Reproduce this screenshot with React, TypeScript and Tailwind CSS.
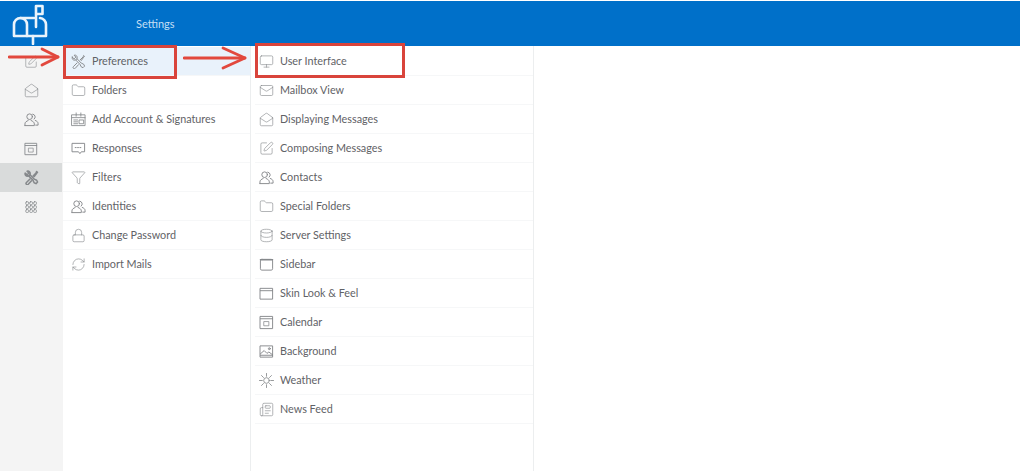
import React from "react";
import { Folder, Funnel, Lock, RefreshCw, Monitor, Mail, MailOpen, SquarePen, Database, Newspaper } from "lucide-react";

type IconProps = { size?: number; className?: string; strokeWidth?: number };

function Svg({ size = 16, strokeWidth = 1, className = "", children }: IconProps & { children: React.ReactNode }) {
  return (
    <svg width={size} height={size} viewBox="0 0 16 16" fill="none" stroke="currentColor" strokeWidth={strokeWidth} strokeLinecap="round" strokeLinejoin="round" className={className}>
      {children}
    </svg>
  );
}

function Tools(p: IconProps) {
  return (
    <Svg {...p}>
      <path d="M5 6.400 9.600 11l1.200 2.600 2 1 1.700-1.700-1-2-2.600-1.200L6.400 5" />
      <path d="M1.300 3.300 3.300 5.200 5.200 3.300 3.300 1.300C5.300.6 7 2.400 6.500 4.300L6.400 5 5 6.400 4.300 6.500C2.400 7 .6 5.300 1.300 3.300Z" />
      <path d="M9.700 6.300 13 3l.4-1.400 1 .9-.9 1L10.900 7M6.400 9.600 2.600 13.400a1.300 1.300 0 0 0 1.900 1.900L8 11.400" />
    </Svg>
  );
}

function Calendar(p: IconProps) {
  return (
    <Svg {...p}>
      <rect x="1.500" y="1.500" width="13" height="13" />
      <path d="M1.500 4h13" />
      <rect x="5.500" y="7" width="5" height="4.500" strokeWidth=".8" />
    </Svg>
  );
}

function AccountSig(p: IconProps) {
  return (
    <Svg {...p} strokeWidth={0.9}>
      <rect x="1" y="3" width="14" height="11.500" />
      <path d="M5.500 1v3.500M10.500 1v3.500M1 6h14M3 8.500h4M3 10.500h4M3 12.500h4M9 8.500h4.500v4H9z" />
    </Svg>
  );
}

function Sidebar(p: IconProps) {
  return (
    <Svg {...p}>
      <rect x="1.500" y="2.500" width="13" height="11.500" rx="1.500" />
      <path d="M1.500 3h13" strokeWidth="1.500" />
    </Svg>
  );
}

function Skin(p: IconProps) {
  return (
    <Svg {...p}>
      <rect x="1.500" y="2.500" width="13" height="11.500" />
      <path d="M1.500 5h13" />
    </Svg>
  );
}

function People(p: IconProps) {
  return (
    <Svg {...p}>
      <circle cx="6" cy="5" r="3" />
      <path d="M1 14.500v-1.800C1 10.800 2.500 10 4.500 9M7.500 9c2 1 3.500 1.800 3.500 3.700v1.800H1" />
      <path d="M9.300 2.300a3 3 0 0 1 1.500 5.300M12 9c1.800.7 3 1.600 3 3.400v1.600h-2.500" />
    </Svg>
  );
}

function Bubble(p: IconProps) {
  return (
    <Svg {...p}>
      <path d="M1.500 2.500h13v9H11l-1.500 2-1.500-2H1.500z" />
      <path d="M4.500 7h7" strokeDasharray="1 1.500" />
    </Svg>
  );
}

function Picture(p: IconProps) {
  return (
    <Svg {...p}>
      <rect x="1.500" y="2" width="13" height="12" />
      <path d="M1.500 10.500 5.500 7l3 3 2-1.500 4 3M1.500 12h13" />
      <circle cx="11" cy="5" r="1" />
    </Svg>
  );
}

function Sunny(p: IconProps) {
  return (
    <Svg {...p} strokeWidth={0.9}>
      <circle cx="8" cy="8" r="3" />
      <path d="M8 .5v3M8 12.500v3M.5 8h3M12.500 8h3M2.700 2.700l2.100 2.100M11.200 11.200l2.100 2.100M13.300 2.700l-2.100 2.100M4.800 11.200l-2.100 2.100" />
    </Svg>
  );
}

function Dots(p: IconProps) {
  return (
    <Svg {...p} strokeWidth={0.9}>
      {[2, 6.500, 11].flatMap((y) =>
        [2, 6.500, 11].map((x) => <rect key={`${x}-${y}`} x={x} y={y} width="3.200" height="3.200" rx="1" />)
      )}
    </Svg>
  );
}

function Mailbox({ className = "" }: { className?: string }) {
  return (
    <svg width="36" height="44" viewBox="0 0 36 44" fill="none" stroke="currentColor" strokeWidth="2.600" strokeLinejoin="round" strokeLinecap="round" className={className}>
      <path d="M2 35V23.500a6.500 6.500 0 0 1 13 0V35H2" />
      <path d="M8.500 17H22M28 17h0a6.500 6.500 0 0 1 6 6.500V35H15" />
      <path d="M24 26V5h6.500v8H24" />
      <path d="M21 35v8" />
    </svg>
  );
}

function Row({ icon, label, active, inset }: { icon: React.ReactNode; label: string; active?: boolean; inset?: boolean }) {
  return (
    <div className={`flex h-[29px] items-center border-b border-[#f6f7f8] ${inset ? "pl-[4px]" : "pl-[8px]"} ${active ? "bg-[#e9f2fb]" : ""}`}>
      <span className="flex w-[15px] justify-center text-[#85888b]">{icon}</span>
      <span className="ml-[6px] text-[10.800px] leading-none whitespace-nowrap text-[#5f6266]">{label}</span>
    </div>
  );
}

const leftRows: [React.ReactNode, string][] = [
  [<Tools size={15} />, "Preferences"],
  [<Folder size={15} strokeWidth={1} />, "Folders"],
  [<AccountSig size={15} />, "Add Account & Signatures"],
  [<Bubble size={15} />, "Responses"],
  [<Funnel size={15} strokeWidth={1} />, "Filters"],
  [<People size={15} />, "Identities"],
  [<Lock size={15} strokeWidth={1} />, "Change Password"],
  [<RefreshCw size={15} strokeWidth={1} />, "Import Mails"],
];

const rightRows: [React.ReactNode, string][] = [
  [<Monitor size={15} strokeWidth={1} />, "User Interface"],
  [<Mail size={15} strokeWidth={1} />, "Mailbox View"],
  [<MailOpen size={15} strokeWidth={1} />, "Displaying Messages"],
  [<SquarePen size={15} strokeWidth={1} />, "Composing Messages"],
  [<People size={15} />, "Contacts"],
  [<Folder size={15} strokeWidth={1} />, "Special Folders"],
  [<Database size={15} strokeWidth={1} />, "Server Settings"],
  [<Sidebar size={15} />, "Sidebar"],
  [<Skin size={15} />, "Skin Look & Feel"],
  [<Calendar size={15} />, "Calendar"],
  [<Picture size={15} />, "Background"],
  [<Sunny size={15} />, "Weather"],
  [<Newspaper size={15} strokeWidth={1} />, "News Feed"],
];

const railIcons: React.ReactNode[] = [
  <SquarePen size={14} strokeWidth={1} />,
  <MailOpen size={15} strokeWidth={1} />,
  <People size={15} />,
  <Calendar size={14} />,
  <Tools size={15} strokeWidth={1.600} />,
  <Dots size={14} />,
];

function Arrow({ className, width, head, half }: { className: string; width: number; head: number; half: number }) {
  return (
    <svg width={width} height={half * 2 + 4} viewBox={`0 0 ${width} ${half * 2 + 4}`} fill="none" stroke="#e2483d" strokeWidth="2.800" strokeLinecap="round" strokeLinejoin="round" className={`absolute ${className}`}>
      <path d={`M1 ${half + 2}H${width - 2}`} />
      <path d={`M${width - head - 2} 2 ${width - 2} ${half + 2} ${width - head - 2} ${half * 2 + 2}`} />
    </svg>
  );
}

export default function App() {
  return (
    <div className="relative h-[471px] w-[1024px] overflow-hidden bg-white pt-px font-['Lato',sans-serif]">
      <header className="relative flex h-[45px] w-[1020px] items-center bg-[#0070c9] text-white">
        <div className="flex h-[45px] w-[136px] items-start pl-[12px]">
          <Mailbox className="text-[#eaf4fb]" />
        </div>
        <span className="pt-px text-[11px] text-[#c4dff4]">Settings</span>
      </header>
      <div className="flex h-[425px]">
        <nav className="flex w-[63px] flex-col bg-[#f4f4f4] pt-px">
          {railIcons.map((icon, i) => (
            <div key={i} className={`flex h-[29px] w-[62px] items-center justify-center text-[#85888b] ${i === 4 ? "bg-[#d9dbdb] text-[#666a6d]" : ""}`}>
              {icon}
            </div>
          ))}
        </nav>
        <section className="w-[188px] border-r border-[#eceeef] pt-px">
          {leftRows.map(([icon, label], i) => (
            <Row key={label} icon={icon} label={label} active={i === 0} />
          ))}
        </section>
        <section className="w-[283px] border-r border-[#eceeef] pl-[4px] pt-px">
          {rightRows.map(([icon, label]) => (
            <Row key={label} icon={icon} label={label} inset />
          ))}
        </section>
      </div>
      <div className="absolute left-[63px] top-[45px] h-[34px] w-[114px] border-[3px] border-[#d9443b]" />
      <div className="absolute left-[255px] top-[43px] h-[35px] w-[150px] border-[3px] border-[#d9443b]" />
      <Arrow className="left-[8px] top-[47px]" width={52} head={16} half={8} />
      <Arrow className="left-[183px] top-[46px]" width={64} head={22} half={10} />
    </div>
  );
}
